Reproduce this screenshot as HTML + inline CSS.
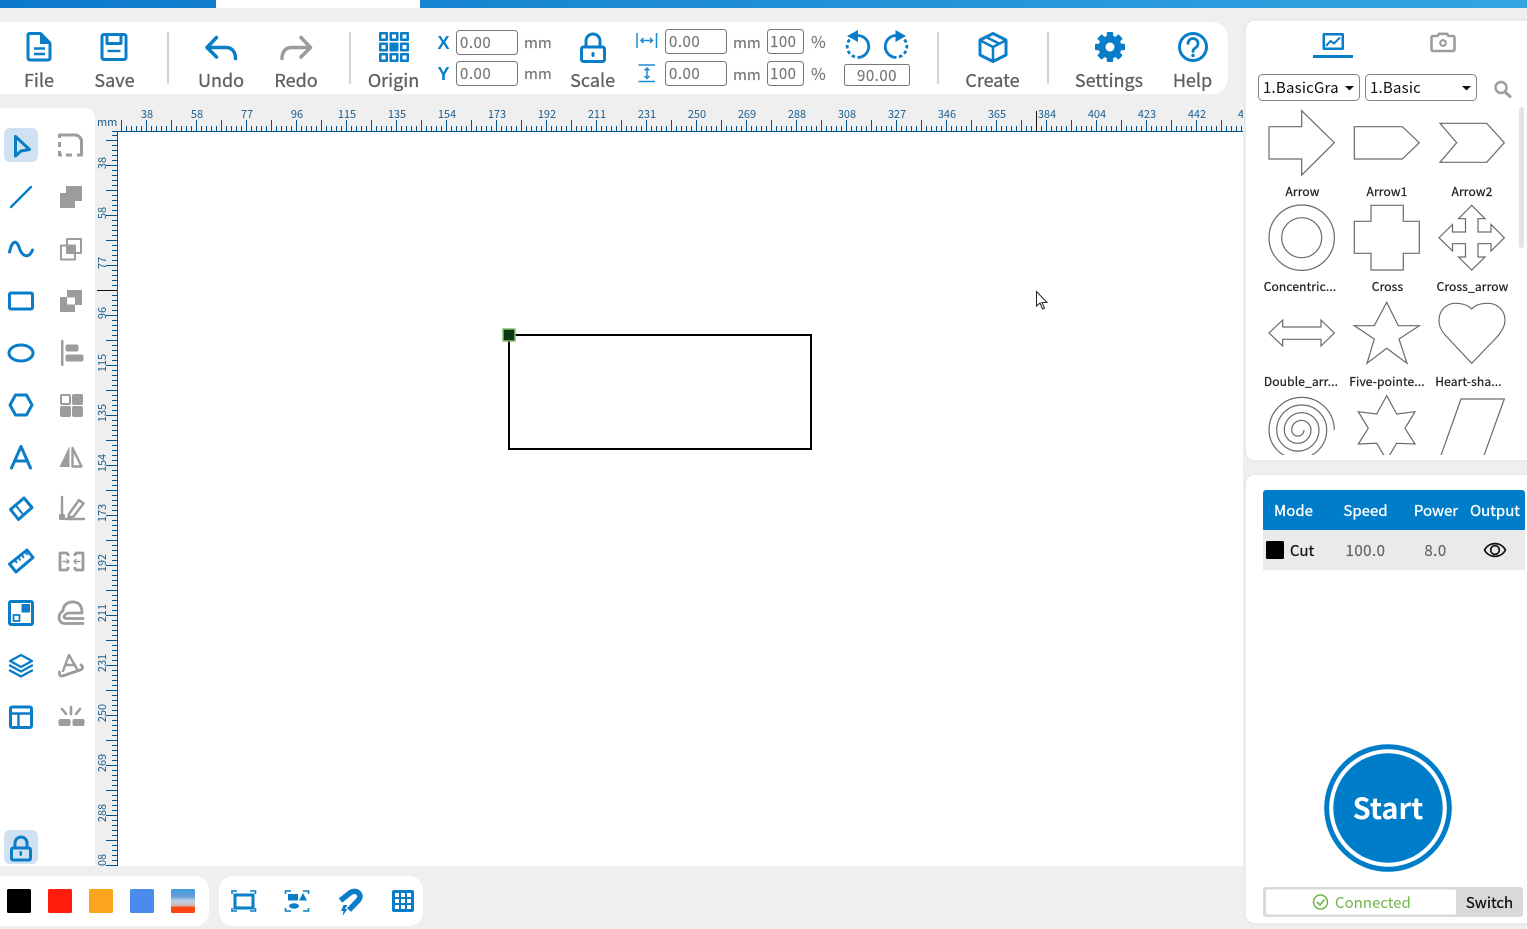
<!DOCTYPE html>
<html><head><meta charset="utf-8"><title>Laser</title>
<style>
html,body{margin:0;padding:0;width:1527px;height:929px;overflow:hidden;background:#efefef}
svg{display:block;font-family:"Noto Sans CJK SC","Liberation Sans",sans-serif}
.b{fill:none;stroke:#0a7dc9;stroke-width:3;stroke-linejoin:round;stroke-linecap:round}
.g{fill:none;stroke:#9c9c9c;stroke-width:3;stroke-linejoin:round;stroke-linecap:round}
.bf{fill:#0a7dc9}.gf{fill:#9c9c9c}
.t{font-size:18px;fill:#5f5f5f;text-anchor:middle;stroke:#5f5f5f;stroke-width:.3}
.i{fill:#fff;stroke:#777;stroke-width:1}
.n{font-size:15px;fill:#777;stroke:#777;stroke-width:.15}
.num{letter-spacing:.5px}
.l{font-size:12px;fill:#222;text-anchor:middle;stroke:#222;stroke-width:.25;letter-spacing:.15px}
.r{font-size:11px;fill:#1a5e8e;text-anchor:middle}
.s{fill:none;stroke:#6a6a6a;stroke-width:1.2;stroke-linejoin:miter}
.h{font-size:15px;fill:#fff;text-anchor:middle;stroke:#fff;stroke-width:.3}
</style></head><body>
<svg width="1527" height="929" viewBox="0 0 1527 929" xmlns="http://www.w3.org/2000/svg">
<defs>
<linearGradient id="top" x1="0" x2="1" y1="0" y2="0"><stop offset="0" stop-color="#0c79cb"/><stop offset="1" stop-color="#33a5e2"/></linearGradient>
<linearGradient id="sw" x1="0" x2="0" y1="0" y2="1"><stop offset="0" stop-color="#3f9fdf"/><stop offset=".3" stop-color="#6b9bd8"/><stop offset=".5" stop-color="#b9d3ea"/><stop offset=".72" stop-color="#d8b0a4"/><stop offset=".73" stop-color="#fb4517"/><stop offset="1" stop-color="#fb4517"/></linearGradient>
<pattern id="hr" patternUnits="userSpaceOnUse" x="121" y="120" width="25" height="11"><rect x="0" y="0" width="1" height="11" fill="#00538c"/><rect x="5" y="6" width="1" height="5" fill="#00538c"/><rect x="10" y="6" width="1" height="5" fill="#00538c"/><rect x="15" y="6" width="1" height="5" fill="#00538c"/><rect x="20" y="6" width="1" height="5" fill="#00538c"/></pattern>
<pattern id="vr" patternUnits="userSpaceOnUse" x="106" y="140" width="11" height="25"><rect x="0" y="0" width="11" height="1" fill="#00538c"/><rect x="6" y="5" width="5" height="1" fill="#00538c"/><rect x="6" y="10" width="5" height="1" fill="#00538c"/><rect x="6" y="15" width="5" height="1" fill="#00538c"/><rect x="6" y="20" width="5" height="1" fill="#00538c"/></pattern>
<clipPath id="sc"><rect x="1250" y="100" width="265" height="355"/></clipPath>
<clipPath id="hc"><rect x="118" y="108" width="1125" height="24"/></clipPath>
<clipPath id="vc"><rect x="95" y="132" width="23" height="734"/></clipPath>
<clipPath id="sel"><rect x="1260" y="76" width="80" height="24"/></clipPath>
</defs>

<rect width="1527" height="929" fill="#efefef"/>
<rect width="1527" height="8" fill="url(#top)"/><rect x="216" width="204" height="8" fill="#fff"/>

<!-- toolbar -->
<path d="M0 22H1212a16 16 0 0 1 16 16V78a16 16 0 0 1-16 16H0Z" fill="#fff"/>
<g fill="#d4d4d4"><rect x="167" y="32" width="2" height="52"/><rect x="349" y="32" width="2" height="52"/><rect x="937" y="32" width="2" height="52"/><rect x="1047" y="32" width="2" height="52"/></g>

<!-- File -->
<path class="b" d="M29.500 33.500H40.500L50 43.500V58a2 2 0 0 1-2 2H30a2 2 0 0 1-2-2V35a1.500 1.500 0 0 1 1.500-1.500Z"/>
<path class="bf" d="M40 33H42L51 42V44H40Z"/>
<path class="b" style="stroke-width:2.400;stroke-linecap:butt" d="M34 48.500H45M34 54H45"/>
<text class="t" x="39" y="87">File</text>
<!-- Save -->
<rect class="b" x="102" y="34.500" width="24" height="25" rx="2"/>
<path class="b" style="stroke-width:3" d="M107 35V43.500H121V35"/>
<path class="b" style="stroke-width:2.400;stroke-linecap:butt" d="M107.500 51H120.500"/>
<text class="t" x="114.500" y="87">Save</text>
<!-- Undo / Redo -->
<path class="b" style="stroke-width:3.500" d="M216.500 37.500L207 47.500L216.500 57M207 47.500H226C232 47.500 235.500 52 235.500 58.500"/>
<text class="t" x="221" y="87">Undo</text>
<path class="g" style="stroke-width:3.500" d="M301 37.500L310.500 47.500L301 57M310.500 47.500H291.500C285.500 47.500 282 52 282 58.500"/>
<text class="t" x="296" y="87">Redo</text>
<!-- Origin -->
<g fill="#0a7dc9"><rect x="379" y="32" width="9" height="9" rx="1"/><rect x="389.500" y="32" width="9" height="9" rx="1"/><rect x="400" y="32" width="9" height="9" rx="1"/><rect x="379" y="42.500" width="9" height="9" rx="1"/><rect x="389.500" y="42.500" width="9" height="9" rx="1"/><rect x="400" y="42.500" width="9" height="9" rx="1"/><rect x="379" y="53" width="9" height="9" rx="1"/><rect x="389.500" y="53" width="9" height="9" rx="1"/><rect x="400" y="53" width="9" height="9" rx="1"/></g>
<g fill="#fff"><rect x="381.500" y="34.500" width="4" height="4"/><rect x="392" y="34.500" width="4" height="4"/><rect x="402.500" y="34.500" width="4" height="4"/><rect x="381.500" y="45" width="4" height="4"/><rect x="402.500" y="45" width="4" height="4"/><rect x="381.500" y="55.500" width="4" height="4"/><rect x="392" y="55.500" width="4" height="4"/><rect x="402.500" y="55.500" width="4" height="4"/></g>
<text class="t" x="393.500" y="87">Origin</text>
<!-- XY -->
<text x="443.500" y="49" text-anchor="middle" style="font-family:'Liberation Sans',sans-serif;font-size:18px;font-weight:700;fill:#0a7dc9">X</text>
<text x="443.500" y="80" text-anchor="middle" style="font-family:'Liberation Sans',sans-serif;font-size:18px;font-weight:700;fill:#0a7dc9">Y</text>
<rect class="i" x="456.500" y="30.500" width="61" height="24" rx="3"/><rect class="i" x="456.500" y="61.500" width="61" height="24" rx="3"/>
<text class="n num" x="460" y="48">0.00</text><text class="n num" x="460" y="79">0.00</text>
<text class="n" x="524" y="48">mm</text><text class="n" x="524" y="79">mm</text>
<!-- Scale lock -->
<rect class="b" x="581.500" y="47" width="23" height="14.500" rx="2"/>
<path class="b" d="M586 46V41a7 7 0 0 1 14 0V46"/>
<rect class="bf" x="591.500" y="52" width="3" height="5" rx="1.500"/>
<text class="t" x="592.600" y="87">Scale</text>
<!-- width/height -->
<path fill="none" stroke="#1a8ad4" stroke-width="1.500" d="M637 33V48M656.500 33V48M641 40.500H652.500M643.500 38L641 40.500L643.500 43M650 38L652.500 40.500L650 43"/>
<path fill="none" stroke="#1a8ad4" stroke-width="1.500" d="M638.500 65H655M638.500 81.500H655M647 68V78.500M644.500 70.500L647 68L649.500 70.500M644.500 76L647 78.500L649.500 76"/>
<rect class="i" x="665.500" y="29.500" width="61" height="24" rx="3"/><rect class="i" x="665.500" y="61.500" width="61" height="24" rx="3"/>
<text class="n num" x="669" y="47">0.00</text><text class="n num" x="669" y="79">0.00</text>
<text class="n" x="733" y="48">mm</text><text class="n" x="733" y="80">mm</text>
<rect class="i" x="767.500" y="29.500" width="36" height="24" rx="3"/><rect class="i" x="767.500" y="61.500" width="36" height="24" rx="3"/>
<text class="n num" x="770" y="47">100</text><text class="n num" x="770" y="79">100</text>
<text class="n" x="811" y="48" style="font-size:16px">%</text><text class="n" x="811" y="80" style="font-size:16px">%</text>
<!-- rotate -->
<path class="b" style="stroke-width:2.800;stroke-linecap:butt" d="M858 35.500A11 11 0 0 1 861 57"/>
<path class="b" style="stroke-width:2.800;stroke-linecap:butt;stroke-dasharray:3.500 2.500" d="M861 57A11 11 0 0 1 850 39"/>
<path class="bf" d="M858 30V42L847 36Z"/>
<path class="b" style="stroke-width:2.800;stroke-linecap:butt" d="M896 35.500A11 11 0 0 0 893 57"/>
<path class="b" style="stroke-width:2.800;stroke-linecap:butt;stroke-dasharray:3.500 2.500" d="M893 57A11 11 0 0 0 904 39"/>
<path class="bf" d="M895.500 30V42L906 36Z"/>
<rect class="i" x="844.500" y="64.500" width="65" height="21" rx="2"/>
<text class="n num" x="877" y="81" text-anchor="middle">90.00</text>
<!-- Create -->
<path class="b" d="M993 33.500L1006 40V55L993 61.500L980 55V40Z"/>
<path class="b" style="stroke-width:2.500" d="M980.500 40.500L993 47L1005.500 40.500M993 47V61M986 37L999 43.500"/>
<text class="t" x="992.500" y="87">Create</text>
<!-- Settings -->
<circle cx="1110" cy="47" r="8" fill="none" stroke="#0a7dc9" stroke-width="7"/>
<g fill="#0a7dc9"><rect x="1106.800" y="32" width="6.400" height="7" rx="1"/><rect x="1106.800" y="55" width="6.400" height="7" rx="1"/><rect x="1106.800" y="32" width="6.400" height="7" rx="1" transform="rotate(45 1110 47)"/><rect x="1106.800" y="55" width="6.400" height="7" rx="1" transform="rotate(45 1110 47)"/><rect x="1106.800" y="32" width="6.400" height="7" rx="1" transform="rotate(90 1110 47)"/><rect x="1106.800" y="55" width="6.400" height="7" rx="1" transform="rotate(90 1110 47)"/><rect x="1106.800" y="32" width="6.400" height="7" rx="1" transform="rotate(135 1110 47)"/><rect x="1106.800" y="55" width="6.400" height="7" rx="1" transform="rotate(135 1110 47)"/></g>
<text class="t" x="1109" y="87">Settings</text>
<!-- Help -->
<circle class="b" cx="1193" cy="47" r="13.500"/>
<path class="b" style="stroke-width:2.800" d="M1188 43.500a5 5 0 1 1 7.500 4.300c-1.700 1-2.500 1.800-2.500 3.700"/>
<circle class="bf" cx="1193" cy="55.500" r="1.700"/>
<text class="t" x="1192.500" y="87">Help</text>

<!-- left panel -->
<path d="M0 108H85a10 10 0 0 1 10 10V866H0Z" fill="#fff"/>
<rect x="118" y="132" width="1125" height="734" fill="#fff"/>
<!-- rulers -->
<rect x="121" y="120" width="1122" height="11" fill="url(#hr)"/>
<rect x="118" y="131" width="1125" height="1" fill="#00538c"/>
<rect x="106" y="132" width="11" height="734" fill="url(#vr)"/>
<rect x="117" y="132" width="1" height="734" fill="#00538c"/>
<rect x="112" y="131" width="6" height="1" fill="#00538c"/>
<rect x="1036" y="111" width="1" height="20" fill="#111"/>
<rect x="97" y="290" width="20" height="1" fill="#111"/>
<text x="97" y="126" style="font-size:11px;fill:#1a5e8e">mm</text>
<g class="r" clip-path="url(#hc)">
<text x="147" y="118">38</text><text x="197" y="118">58</text><text x="247" y="118">77</text><text x="297" y="118">96</text><text x="347" y="118">115</text><text x="397" y="118">135</text><text x="447" y="118">154</text><text x="497" y="118">173</text><text x="547" y="118">192</text><text x="597" y="118">211</text><text x="647" y="118">231</text><text x="697" y="118">250</text><text x="747" y="118">269</text><text x="797" y="118">288</text><text x="847" y="118">308</text><text x="897" y="118">327</text><text x="947" y="118">346</text><text x="997" y="118">365</text><text x="1047" y="118">384</text><text x="1097" y="118">404</text><text x="1147" y="118">423</text><text x="1197" y="118">442</text><text x="1247" y="118">461</text>
</g>
<g class="r" clip-path="url(#vc)">
<text transform="translate(106 163) rotate(-90)">38</text><text transform="translate(106 213) rotate(-90)">58</text><text transform="translate(106 263) rotate(-90)">77</text><text transform="translate(106 313) rotate(-90)">96</text><text transform="translate(106 363) rotate(-90)">115</text><text transform="translate(106 413) rotate(-90)">135</text><text transform="translate(106 463) rotate(-90)">154</text><text transform="translate(106 513) rotate(-90)">173</text><text transform="translate(106 563) rotate(-90)">192</text><text transform="translate(106 613) rotate(-90)">211</text><text transform="translate(106 663) rotate(-90)">231</text><text transform="translate(106 713) rotate(-90)">250</text><text transform="translate(106 763) rotate(-90)">269</text><text transform="translate(106 813) rotate(-90)">288</text><text transform="translate(106 863) rotate(-90)">308</text>
</g>

<!-- left tools col 1 -->
<rect x="4" y="128" width="34" height="34" rx="6" fill="#d0e1f2"/>
<path class="b" d="M15.500 136.500L29.500 149.500L21 151L15.500 156Z"/>
<path class="b" style="stroke-width:2.400" d="M11 207L31 187"/>
<path class="b" d="M9.500 252C12 241 16 239 19 247C22 257 29 259 32.500 250"/>
<rect class="b" x="9.500" y="293" width="23" height="16" rx="1.500"/>
<ellipse class="b" cx="21" cy="353" rx="12" ry="8"/>
<path class="b" d="M15.500 395H26.500L32 405L26.500 415H15.500L10 405Z"/>
<path class="b" d="M11.500 468L21 446.500L30.500 468M14.500 461H27.500"/>
<path class="b" d="M10.500 509.500L24 498L32 507.500L18.500 519.500Z"/>
<path class="b" style="stroke-width:2" d="M15.500 505L23 514.500"/>
<path class="b" d="M9.500 564L27 550L33 557.500L16 572Z"/>
<path class="b" style="stroke-width:1.800;stroke-linecap:butt" d="M15 560l2 3M18.500 557.500l2 3M22 555l2 3M25.500 552l2 3"/>
<rect class="b" x="9.500" y="601.500" width="23" height="23" rx="1.500"/>
<rect class="bf" x="21.500" y="604" width="8.500" height="8.500"/>
<rect class="b" style="stroke-width:1.800" x="13.500" y="615" width="6" height="6"/>
<path class="b" style="stroke-width:2.400" d="M21 655L32 661L21 667L10 661Z"/>
<path class="b" style="stroke-width:2.400" d="M10 665.500L21 671.500L32 665.500M10 670.500L21 676.500L32 670.500"/>
<rect class="b" x="10.500" y="707" width="21" height="20.500" rx="1.500"/>
<path class="b" style="stroke-width:2.400" d="M11 713.500H31M18.500 714V727"/>
<rect x="4" y="830" width="34" height="34" rx="6" fill="#d0e1f2"/>
<rect class="b" x="11.500" y="848" width="19" height="12" rx="1.500"/>
<path class="b" d="M15 847V843a6 6 0 0 1 12 0V847"/>
<rect class="bf" x="19.500" y="851" width="2.500" height="5" rx="1.200"/>

<!-- left tools col 2 -->
<path class="g" style="stroke-linecap:butt" d="M62 135H75A6.500 6.500 0 0 1 81.500 141.500V155H77M72 155H66M62 155H59.500V151M59.500 147V142M59.500 138V135H62"/>
<path class="gf" d="M66 186H82V201H75V208H60V193H66Z"/>
<g class="g" style="stroke-width:2"><rect x="67" y="239" width="14" height="14"/><rect x="61" y="245.500" width="14" height="14"/></g>
<rect class="gf" x="67" y="245.500" width="8" height="8"/>
<path class="gf" d="M67 290H82V305H75V297.500H67ZM60 297H67V304.500H75V312H60Z"/>
<rect class="gf" x="61" y="340" width="2.500" height="26" rx="1"/>
<rect class="gf" x="65.500" y="344.500" width="13" height="7" rx="2"/><rect class="gf" x="65.500" y="354.500" width="18" height="7" rx="2"/>
<rect class="g" style="stroke-width:2" x="61" y="395" width="9" height="9" rx="1"/>
<rect class="gf" x="72" y="394" width="11" height="11" rx="2"/><rect class="gf" x="60" y="406" width="11" height="11" rx="2"/><rect class="gf" x="72" y="406" width="11" height="11" rx="2"/>
<path class="gf" d="M69.500 446V467H59.500Z"/>
<path class="g" style="stroke-width:2.400" d="M72.500 448V466.500H81.500Z"/>
<path class="g" style="stroke-width:2.400" d="M62 497V515M66 519H84"/>
<rect class="gf" x="59" y="514" width="6" height="6" rx="1"/>
<path class="g" style="stroke-width:2.400" d="M69 514L79 500L83.500 503.500L73.500 516.500L68.500 517.500Z"/>
<path class="g" style="stroke-width:2.800;stroke-linecap:butt" d="M68 553H60V570H68M68 553V556M68 567V570M75 553H83V570H75M75 553V556M75 567V570"/>
<path class="g" style="stroke-width:1.400" d="M63 561.500H69M67 559.500L69 561.500L67 563.500M80 561.500H74M76 559.500L74 561.500L76 563.500"/>
<path class="g" style="stroke-width:2.800" d="M83 623.500H65C58 623.500 57 614 63 611C63 604 69 601.500 74 602C80 602.500 82 607 82 613H70C64 613 62 619 67 618.500H83"/>
<path class="g" style="stroke-width:2.400" d="M63 671L69 655L77 669M65.500 665H75"/>
<path class="g" style="stroke-width:2.800" d="M59.500 672C59 676 61 676.500 64 675.500L80 670C83 669 83.500 667 81 665"/>
<g class="g" style="stroke-width:2.600"><path d="M71 707V714M62 709L66 714M80 709L76 714"/></g>
<rect class="gf" x="58.500" y="719" width="12" height="7" rx="2"/><rect class="gf" x="72.500" y="719" width="12" height="7" rx="2"/>

<!-- drawing -->
<rect x="509" y="335" width="302" height="114" fill="none" stroke="#000" stroke-width="2"/>
<rect x="503" y="329" width="12" height="12" fill="#0a3a14" stroke="#8dbb72" stroke-width="1.500"/>
<path d="M1036.500 291.500V306L1040 303L1042.500 309L1044.500 308L1042 302.500H1047Z" fill="#fff" stroke="#222" stroke-width="1"/>

<!-- bottom -->
<path d="M0 876H195a14 14 0 0 1 14 14V912a14 14 0 0 1-14 14H0Z" fill="#fff"/>
<rect x="219" y="876" width="204" height="50" rx="14" fill="#fff"/>
<rect x="7" y="889" width="24" height="24" rx="1.500" fill="#000"/>
<rect x="48" y="889" width="24" height="24" rx="1.500" fill="#fd1d0a"/>
<rect x="89" y="889" width="24" height="24" rx="1.500" fill="#fba61c"/>
<rect x="130" y="889" width="24" height="24" rx="1.500" fill="#4a8bed"/>
<rect x="171" y="889" width="24" height="24" rx="1.500" fill="url(#sw)"/>
<rect class="b" x="235" y="895" width="18" height="13" style="stroke-linejoin:miter"/>
<path class="b" style="stroke-width:1.600;stroke-linecap:butt;stroke-linejoin:miter" d="M232 894V891H237M250 891H255.500V894M255.500 908V911H250M237 911H232V908"/>
<path class="b" style="stroke-width:1.600;stroke-linecap:butt;stroke-linejoin:miter" d="M285.500 894V891H291M303 891H308.500V894M308.500 908V911H303M291 911H285.500V908"/>
<rect class="bf" x="288" y="894" width="10" height="6.500"/><path class="bf" d="M303 893L307 900.500H299Z"/><ellipse class="bf" cx="294" cy="906" rx="5" ry="2.700"/>
<path fill="none" stroke="#0a7dc9" stroke-width="5.500" d="M340.500 900.500L350.500 892.500C356 889 362.500 894 359 899.500L349 910"/>
<path class="bf" d="M343.500 905H347.500L345 909H347.500L342.500 916L343.500 911H341Z"/>
<rect class="bf" x="392" y="890" width="22" height="22" rx="2"/>
<g fill="#fff"><rect x="395" y="893" width="4" height="4"/><rect x="401" y="893" width="4" height="4"/><rect x="407" y="893" width="4" height="4"/><rect x="395" y="899" width="4" height="4"/><rect x="401" y="899" width="4" height="4"/><rect x="407" y="899" width="4" height="4"/><rect x="395" y="905" width="4" height="4"/><rect x="401" y="905" width="4" height="4"/><rect x="407" y="905" width="4" height="4"/></g>

<!-- right panel top -->
<rect x="1245" y="20" width="295" height="441" rx="10" fill="#fff" stroke="#e6e6e6" stroke-width="1.500"/>
<rect x="1322.500" y="33" width="21.500" height="17" rx="1.500" class="bf"/>
<rect x="1325" y="35.500" width="16.500" height="12" fill="#fff"/>
<path fill="none" stroke="#0a7dc9" stroke-width="2" d="M1326 46L1330.500 41L1334 43.500L1340 37.500"/>
<rect x="1313" y="55" width="40" height="3" class="bf"/>
<path class="g" style="stroke-width:2.600" d="M1433 36H1437.500L1439 33.800H1447L1448.500 36H1453A1.500 1.500 0 0 1 1454.500 37.500V49.500A1.500 1.500 0 0 1 1453 51H1433A1.500 1.500 0 0 1 1431.500 49.500V37.500A1.500 1.500 0 0 1 1433 36Z"/>
<circle class="g" cx="1443" cy="43" r="2.800" style="stroke-width:2.200"/>
<rect x="1258.500" y="74.500" width="101" height="26" rx="4" fill="#fff" stroke="#888"/>
<rect x="1365.500" y="74.500" width="111" height="26" rx="4" fill="#fff" stroke="#888"/>
<text x="1263" y="93" clip-path="url(#sel)" style="font-size:15px;fill:#111;letter-spacing:.2px">1.BasicGraph</text>
<path d="M1345 86H1354L1349.500 90.500Z" fill="#111"/>
<text x="1370" y="93" style="font-size:15px;fill:#111;letter-spacing:.2px">1.Basic</text>
<path d="M1462 86H1471L1466.500 90.500Z" fill="#111"/>
<circle class="g" cx="1501" cy="87.500" r="5.500" style="stroke-width:2.400"/>
<path class="g" d="M1505 92L1510 96.500"/>
<rect x="1519" y="107" width="5" height="141" rx="2.500" fill="#e3e3e3"/>

<path class="s" d="M1269 126.700H1301.700V110.700L1334.300 142.700L1301.700 175V159H1269Z"/>
<path class="s" d="M1354.300 126.700H1402.300L1419.300 142.700L1402.300 159H1354.300Z"/>
<path class="s" d="M1440 123.300H1486.700L1504.300 142.700L1486.700 162.300H1440L1456.700 142.700Z"/>
<text class="l" x="1302.500" y="196">Arrow</text><text class="l" x="1387" y="196">Arrow1</text><text class="l" x="1472" y="196">Arrow2</text>
<circle class="s" cx="1301.700" cy="237.700" r="32.700"/><circle class="s" cx="1301.700" cy="237.700" r="20"/>
<path class="s" d="M1371 205.300H1403.300V221.300H1419.300V253.300H1403.300V270H1371V253.300H1354.300V221.300H1371Z"/>
<path class="s" d="M1471.700 205.300L1485 218.700H1478V232H1491V224.500L1504.300 237.700L1491 251V243.700H1478V257H1485L1471.700 270L1458.500 257H1465.500V243.700H1452.500V251L1439 237.700L1452.500 224.500V232H1465.500V218.700H1458.500Z"/>
<text class="l" x="1300" y="291">Concentric...</text><text class="l" x="1387.500" y="291">Cross</text><text class="l" x="1472.500" y="291">Cross_arrow</text>
<path class="s" d="M1269 333L1282.700 320V327H1321V320L1334.300 333L1321 346V339.300H1282.700V346Z"/>
<path class="s" d="M1386.700 302.300L1398.300 325.700H1419.300L1399 339L1407 363.300L1386.700 348.300L1367 363.300L1374.300 339L1354.300 325.700H1374.300Z"/>
<path class="s" d="M1471.700 363.300L1447 337C1441 331 1439 326 1439 320C1439 310 1447 303.300 1455 303.300C1462 303.300 1468 305 1471.700 309C1475 305 1481 303.300 1488 303.300C1497 303.300 1505 310 1505 320C1505 326 1502 331 1497 337Z"/>
<text class="l" x="1301" y="386">Double_arr...</text><text class="l" x="1387" y="386">Five-pointe...</text><text class="l" x="1468.500" y="386">Heart-sha...</text>
<g clip-path="url(#sc)">
<path class="s" d="M1334.300 430A32.650 32.650 0 0 0 1269 430A28.850 28.850 0 0 0 1326.700 430A25 25 0 0 0 1276.700 430A21.150 21.150 0 0 0 1319 430A17.350 17.350 0 0 0 1284.300 430A13.350 13.350 0 0 0 1311 430A9.650 9.650 0 0 0 1291.700 430A6.150 6.150 0 0 0 1304 430"/>
<path class="s" d="M1386.700 395.700L1396.700 414L1415 411.700L1405 428.300L1415 444L1396.700 443.300L1386.700 460L1376.700 443.300L1358.300 444L1368.300 428.300L1358.300 411.700L1376.700 414Z"/>
<path class="s" d="M1461 399H1504.300L1477 475H1434Z"/>
</g>

<!-- right panel bottom -->
<rect x="1245" y="474" width="295" height="450" rx="10" fill="#fff" stroke="#e6e6e6" stroke-width="1.500"/>
<path d="M1263 493a3 3 0 0 1 3-3H1522a3 3 0 0 1 3 3V530H1263Z" fill="#007dc8"/>
<rect x="1263" y="530" width="262" height="40" fill="#eaeaea"/>
<text class="h" x="1293.500" y="516">Mode</text><text class="h" x="1365.500" y="516">Speed</text><text class="h" x="1436" y="516">Power</text><text class="h" x="1495" y="516">Output</text>
<rect x="1266" y="541" width="18" height="18" rx="1.500" fill="#000"/>
<text x="1290" y="556" style="font-size:15px;fill:#111;stroke:#111;stroke-width:.25">Cut</text>
<text class="num" x="1365.500" y="556" text-anchor="middle" style="font-size:15px;fill:#666;stroke:#666;stroke-width:.2">100.0</text>
<text class="num" x="1435.500" y="556" text-anchor="middle" style="font-size:15px;fill:#666;stroke:#666;stroke-width:.2">8.0</text>
<path d="M1484.500 550C1489 541.500 1501 541.500 1505.500 550C1501 558.500 1489 558.500 1484.500 550Z" fill="none" stroke="#111" stroke-width="1.700"/>
<circle cx="1495" cy="550" r="4.300" fill="none" stroke="#111" stroke-width="1.700"/>
<circle cx="1388" cy="808" r="61.300" fill="none" stroke="#007dc8" stroke-width="5"/>
<circle cx="1388" cy="808" r="54.700" fill="#007dc8"/>
<text x="1388" y="819" text-anchor="middle" style="font-size:29px;font-weight:700;fill:#fff">Start</text>
<rect x="1263" y="887" width="260" height="30" rx="3" fill="#d9d9d9"/>
<rect x="1266" y="889.500" width="190" height="25" rx="2" fill="#fff"/>
<circle cx="1320.500" cy="902" r="7" fill="none" stroke="#71b44a" stroke-width="1.500"/>
<path d="M1317 902L1320 905L1324.500 899.500" fill="none" stroke="#71b44a" stroke-width="1.600"/>
<text x="1335" y="908" style="font-size:15px;fill:#71b44a">Connected</text>
<text x="1489.500" y="908" text-anchor="middle" style="font-size:15px;fill:#111;stroke:#111;stroke-width:.25">Switch</text>
</svg>
</body></html>
